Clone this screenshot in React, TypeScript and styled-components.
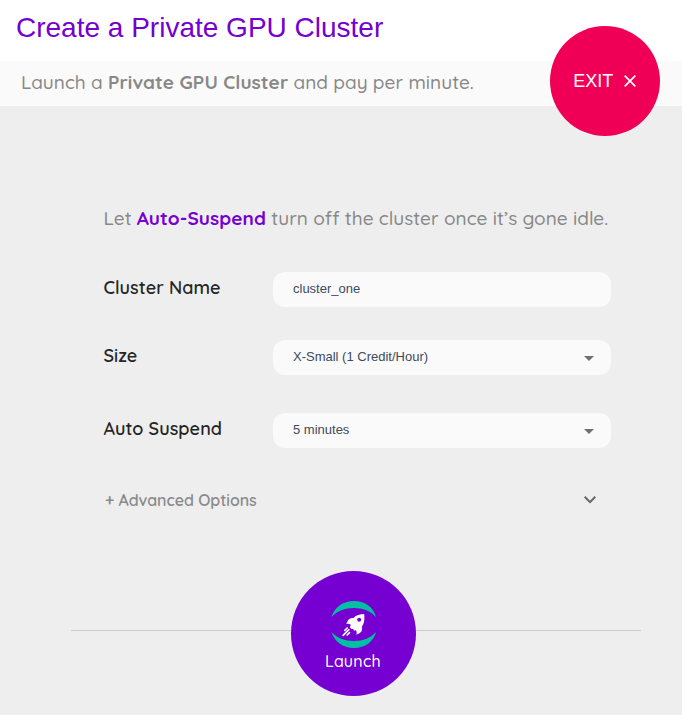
import React from "react";
import styled, { createGlobalStyle } from "styled-components";

const GlobalStyle = createGlobalStyle`
  *, *::before, *::after { box-sizing: border-box; }
  body { margin: 0; background: #eeeeee; font-family: "Quicksand", "Lato", sans-serif; }
`;

const Page = styled.main`
  position: relative;
  height: 715px;
  overflow: hidden;
  background: #eeeeee;
`;

const TitleBar = styled.header`
  height: 61px;
  padding: 11px 16px 0;
  background: #ffffff;
`;

const Title = styled.h1`
  margin: 0;
  font: 400 28px/33px "Liberation Sans", Arial, sans-serif;
  color: #7500d1;
`;

const SubBar = styled.div`
  height: 45px;
  padding-left: 21px;
  background: #fafafa;
`;

const Lead = styled.p`
  margin: 0;
  font-size: 19px;
  font-weight: 500;
  line-height: 43px;
  letter-spacing: 0.03px;
  white-space: nowrap;
  color: #888888;
`;

const Strong = styled.strong<{ $accent?: boolean }>`
  font-weight: 700;
  letter-spacing: 0.08px;
  color: ${(p) => (p.$accent ? "#7500d1" : "inherit")};
`;

const ExitButton = styled.button`
  position: absolute;
  top: 26px;
  left: 550px;
  display: flex;
  align-items: center;
  gap: 11px;
  width: 110px;
  height: 110px;
  padding: 0 0 0 23.3px;
  border: 0;
  border-radius: 50%;
  background: #ef0056;
  color: #ffffff;
  font: 400 18px/20px "Liberation Sans", Arial, sans-serif;
`;

const Form = styled.form`
  padding: 91px 71px 0 103px;
`;

const Hint = styled(Lead)`
  padding-left: 0.4px;
`;

const Field = styled.div<{ $gap: number }>`
  display: grid;
  grid-template-columns: 170px 338px;
  height: 35px;
  margin-top: ${(p) => p.$gap}px;
`;

const Label = styled.label`
  padding-left: 0.5px;
  font-size: 18px;
  font-weight: 600;
  line-height: 31px;
  letter-spacing: 0.06px;
  color: #262626;
`;

const Control = styled.div`
  display: flex;
  align-items: center;
  justify-content: space-between;
  padding: 0 17px 1px 20px;
  border-radius: 12px;
  background: #fafafa;
  color: #3c4a5e;
  font: 400 13px/16px "Liberation Sans", Arial, sans-serif;
`;

const Caret = styled.span`
  margin-top: 3px;
  border: 5px solid transparent;
  border-top-color: #707070;
  border-bottom: 0;
`;

const Advanced = styled.div`
  display: flex;
  align-items: center;
  justify-content: space-between;
  height: 24px;
  margin-top: 40px;
  padding: 0 15px 0 2px;
  width: 508px;
  font-size: 16px;
  font-weight: 600;
  letter-spacing: -0.07px;
  color: #8a8a8a;
`;

const Footer = styled.footer`
  display: flex;
  align-items: center;
  height: 125px;
  margin: 59px 41px 0 71px;
`;

const Rule = styled.span<{ $width: number }>`
  width: ${(p) => p.$width}px;
  height: 1px;
  margin-bottom: 6px;
  background: #cccccc;
`;

const LaunchButton = styled.button`
  display: flex;
  flex-direction: column;
  align-items: center;
  width: 125px;
  height: 125px;
  padding: 30px 1px 0 0;
  border: 0;
  border-radius: 50%;
  background: #7500d1;
  color: #ffffff;
  font: 500 16px/20px "Quicksand", "Lato", sans-serif;
  letter-spacing: 0.3px;
`;

const Emblem = styled.svg`
  display: block;
  width: 48px;
  height: 47px;
  margin-bottom: 3px;
`;

const RocketEmblem = () => (
  <Emblem viewBox="0 0 48 47">
    <g fill="#00bfa5">
      <path d="M2.500 16C5.500 6.500 13.500 0 25 0s19.500 6.500 22 16C41.500 10 34 7 25 7S8 10 2.500 16Z" />
      <path d="M2.500 31C5.500 40.500 13.500 47 25 47s19.500-6.500 22-16C41.500 37 34 40 25 40S8 37 2.500 31Z" />
    </g>
    <g transform="translate(5.5 4) scale(.33333)">
      <path
        fill="#fff"
        d="M89 27C77 27 65 30 57 39C49 38 43 41 40 47L35 57C41 56 46 57 49 59L46 67L51 72C55 71 58 73 59 77L64 76C67 79 67 84 66 89L76 84C83 79 84 72 82 65C89 57 91 42 89 27Z"
      />
      <circle cx="74" cy="44" r="6" fill="#7500d1" />
      <path d="M38 69L31 76M43 74L26 91M45 83L38 90" fill="none" stroke="#fff" strokeWidth="5" strokeLinecap="round" />
    </g>
  </Emblem>
);

export default function App() {
  return (
    <>
      <GlobalStyle />
      <Page>
        <TitleBar>
          <Title>Create a Private GPU Cluster</Title>
        </TitleBar>
        <SubBar>
          <Lead>
            Launch a <Strong>Private GPU Cluster</Strong> and pay per minute.
          </Lead>
        </SubBar>
        <ExitButton type="button">
          EXIT
          <svg width="12" height="12" viewBox="0 0 12 12" fill="none" stroke="currentColor" strokeWidth="1.7">
            <path d="M.7.7l10.600 10.600M11.300.7L.7 11.300" />
          </svg>
        </ExitButton>
        <Form>
          <Hint>
            Let <Strong $accent>Auto-Suspend</Strong> turn off the cluster once it’s gone idle.
          </Hint>
          <Field $gap={32}>
            <Label>Cluster Name</Label>
            <Control>cluster_one</Control>
          </Field>
          <Field $gap={33}>
            <Label>Size</Label>
            <Control>X-Small (1 Credit/Hour)<Caret /></Control>
          </Field>
          <Field $gap={38}>
            <Label>Auto Suspend</Label>
            <Control>5 minutes<Caret /></Control>
          </Field>
          <Advanced>
            + Advanced Options
            <svg width="12" height="8" viewBox="0 0 12 8" fill="none" stroke="#666666" strokeWidth="2">
              <path d="M.7 .8L6 6.100 11.300 .8" />
            </svg>
          </Advanced>
        </Form>
        <Footer>
          <Rule $width={220} />
          <LaunchButton type="button">
            <RocketEmblem />
            Launch
          </LaunchButton>
          <Rule $width={225} />
        </Footer>
      </Page>
    </>
  );
}
